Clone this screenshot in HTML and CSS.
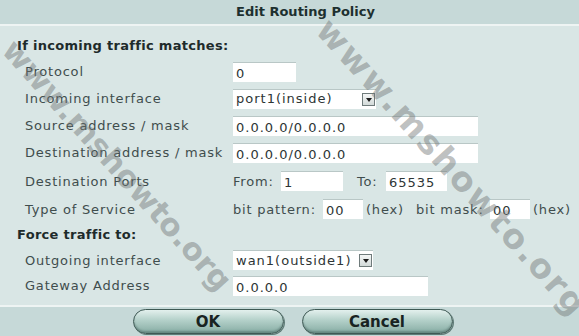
FILE: index.html
```html
<!DOCTYPE html>
<html lang="en">
<head>
    <meta charset="UTF-8">
    <meta name="viewport" content="width=device-width, initial-scale=1.0">
    <title>Edit Routing Policy</title>
    <link rel="stylesheet" href="styles.css">
</head>
<body>
    <div class="dialog">
        <div class="dialog-title">Edit Routing Policy</div>

        <div class="dialog-body">
            <div class="section-title">If incoming traffic matches:</div>

            <div class="row">
                <span class="label">Protocol</span>
                <span class="field w-proto">0</span>
            </div>
            <div class="row">
                <span class="label">Incoming interface</span>
                <span class="select w-port">
                    <span class="select-text">port1(inside)</span>
                    <span class="select-arrow"></span>
                </span>
            </div>
            <div class="row">
                <span class="label">Source address / mask</span>
                <span class="field w-addr">0.0.0.0/0.0.0.0</span>
            </div>
            <div class="row">
                <span class="label">Destination address / mask</span>
                <span class="field w-addr">0.0.0.0/0.0.0.0</span>
            </div>
            <div class="row row-ports">
                <span class="label">Destination Ports</span>
                <span class="inline">
                    <span class="text t-from">From:</span>
                    <span class="field w-from">1</span>
                    <span class="text t-to">To:</span>
                    <span class="field w-to">65535</span>
                </span>
            </div>
            <div class="row row-tos">
                <span class="label">Type of Service</span>
                <span class="inline">
                    <span class="text t-pattern">bit pattern:</span>
                    <span class="field w-hex">00</span>
                    <span class="text t-hex">(hex)</span>
                    <span class="text t-mask">bit mask:</span>
                    <span class="field w-hex">00</span>
                    <span class="text t-hex">(hex)</span>
                </span>
            </div>

            <div class="section-title section-force">Force traffic to:</div>

            <div class="row row-tight">
                <span class="label">Outgoing interface</span>
                <span class="select w-wan">
                    <span class="select-text">wan1(outside1)</span>
                    <span class="select-arrow"></span>
                </span>
            </div>
            <div class="row">
                <span class="label">Gateway Address</span>
                <span class="field w-gw">0.0.0.0</span>
            </div>
        </div>

        <div class="dialog-footer">
            <button class="pill">OK</button>
            <button class="pill">Cancel</button>
        </div>

        <!-- Watermarks over the dialog: -->
        <span class="watermark wm-left">www.mshowto.org</span>
        <span class="watermark wm-right">www.mshowto.org</span>
    </div>
</body>
</html>
```

FILE: styles.css
```css
html, body {
    height: 100%;
    margin: 0;
    box-sizing: border-box;
}
body {
    background: #d9e6e5;
    font-family: "DejaVu Sans", Verdana, sans-serif;
    font-size: 13px;
    letter-spacing: 0.8px;
    color: #3f4d4d;
    overflow: hidden;
}

.dialog {
    position: relative;
    display: flex;
    flex-direction: column;
    width: 579px;
    height: 336px;
    overflow: hidden;
}

.dialog-title {
    height: 24px;
    line-height: 24px;
    padding-left: 32px;
    text-align: center;
    font-weight: bold;
    font-size: 13px;
    letter-spacing: 0;
    color: #1d302f;
    background: #c6d9d8;
    border-bottom: 2px solid #eef4f3;
}

.dialog-body {
    flex: 1;
    display: flex;
    flex-direction: column;
    padding: 8px 0 0 17px;
}

.section-title {
    height: 24px;
    line-height: 24px;
    font-weight: bold;
    letter-spacing: 0.3px;
    color: #1e2b2b;
}
.section-force {
    height: 26px;
    line-height: 26px;
}

.row {
    display: flex;
    align-items: center;
    height: 27px;
}
.row-ports { height: 30px; }
.row-tos { height: 26px; }
.row-tight { height: 24px; }

.label {
    width: 216px;
    padding-left: 8px;
    box-sizing: border-box;
    flex-shrink: 0;
    white-space: nowrap;
}

.field {
    display: inline-block;
    height: 20px;
    line-height: 21px;
    padding-left: 3px;
    box-sizing: border-box;
    background: #fff;
    border-top: 1px solid #b9c7c6;
    color: #2d3535;
    letter-spacing: 1px;
}
.w-proto { width: 63px; }
.w-addr { width: 245px; }
.w-from { width: 62px; }
.w-to { width: 61px; }
.w-hex { width: 40px; }
.w-gw { width: 195px; }

.inline {
    display: flex;
    align-items: center;
    white-space: nowrap;
}
.t-from { width: 48px; }
.t-to { width: 29px; margin-left: 14px; }
.t-pattern { width: 90px; }
.t-hex { width: 47px; margin-left: 3px; }
.t-mask { width: 74px; margin-left: 3px; }

.select {
    display: flex;
    align-items: center;
    height: 20px;
    background: #fff;
    box-sizing: border-box;
    border-top: 1px solid #b9c7c6;
    color: #2d3535;
}
.w-port { width: 143px; }
.w-wan { width: 140px; }
.select-text {
    flex: 1;
    padding-left: 3px;
    line-height: 20px;
    letter-spacing: 1px;
    white-space: nowrap;
}
.select-arrow {
    position: relative;
    flex-shrink: 0;
    width: 11px;
    height: 11px;
    margin-right: 1px;
    border: 1px solid #6f7b7b;
    background: linear-gradient(#f4f6f6, #d3dad9);
}
.select-arrow::after {
    content: "";
    position: absolute;
    left: 3px;
    top: 4px;
    border-left: 3px solid transparent;
    border-right: 3px solid transparent;
    border-top: 4px solid #1b1b1b;
}

.dialog-footer {
    display: flex;
    justify-content: center;
    align-items: center;
    gap: 18px;
    height: 29px;
    background: #c6d9d8;
    border-top: 2px solid #eef4f3;
    padding-left: 6px;
}

.pill {
    width: 151px;
    height: 25px;
    border: 1px solid #3e5954;
    border-radius: 13px;
    background: linear-gradient(#e3f0ed 0%, #b3d0c9 45%, #86aca3 100%);
    box-shadow: inset 0 -2px 2px rgba(40, 70, 65, 0.35), 1px 1px 0 #5f7c77;
    font-family: "DejaVu Sans", Verdana, sans-serif;
    font-weight: bold;
    font-size: 15px;
    color: #182322;
    padding: 0;
}

.watermark {
    position: absolute;
    font-family: "DejaVu Sans", Verdana, sans-serif;
    font-weight: bold;
    font-size: 34px;
    letter-spacing: 2px;
    color: rgba(110, 115, 115, 0.45);
    white-space: nowrap;
    transform-origin: 0 0;
    transform: rotate(48deg);
    pointer-events: none;
}
.wm-left {
    left: 22px;
    top: 32px;
    font-size: 31px;
    letter-spacing: 0;
}
.wm-right { left: 338px; top: 10px; }
```
